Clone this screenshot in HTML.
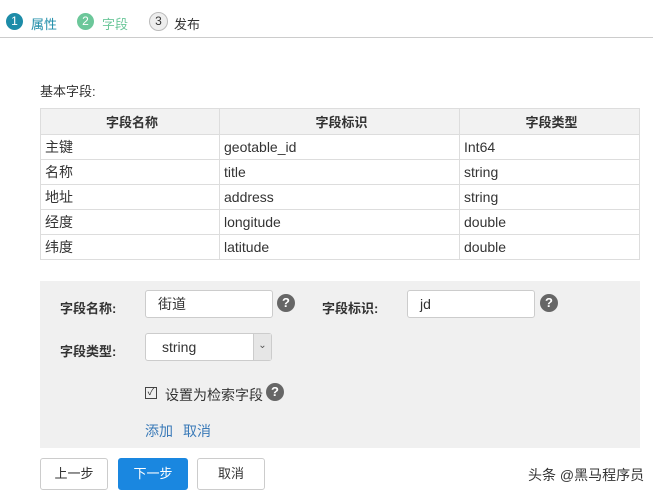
<!DOCTYPE html><html><head><style>
body{margin:0;width:653px;height:497px;background:#fff;font-family:"Liberation Sans","Noto Sans CJK SC",sans-serif;font-size:13px;color:#333;position:relative;overflow:hidden}
.a{position:absolute}
.c{position:absolute;width:17px;height:17px;border-radius:50%;text-align:center;line-height:17px;font-size:12px}
table{position:absolute;left:40px;top:108px;width:600px;border-collapse:collapse}
td,th{border:1px solid #ddd;height:24px;padding:0 0 0 4px;font-size:14px;text-align:left;font-weight:normal}
th{background:#f2f2f2;text-align:center;font-weight:bold;font-size:13px;height:25px}
.q{position:absolute;width:18px;height:18px;border-radius:50%;background:#666;color:#fff;font-weight:bold;font-size:13px;text-align:center;line-height:18px}
.in{position:absolute;background:#fff;border:1px solid #ccc;border-radius:3px;height:26px;line-height:26px;font-size:14px}
.lb{position:absolute;font-weight:bold;font-size:13px}
.btn{position:absolute;top:458px;height:30px;border:1px solid #ccc;border-radius:3px;background:#fff;text-align:center;line-height:30px;font-size:13px}
</style></head><body>
<div class="c" style="left:6px;top:13px;background:#1d8ca8;color:#fff">1</div><div class="a" style="left:31px;top:14px;color:#1d8ca8;font-size:13px">属性</div>
<div class="c" style="left:77px;top:13px;background:#6cc79a;color:#fff">2</div><div class="a" style="left:102px;top:14px;color:#6cc79a;font-size:13px">字段</div>
<div class="c" style="left:149px;top:12px;background:#eee;border:1px solid #bbb;color:#333">3</div><div class="a" style="left:174px;top:14px;font-size:13px">发布</div>
<div class="a" style="left:0;top:37px;width:653px;height:1px;background:#ccc"></div>
<div class="a" style="left:40px;top:81px">基本字段:</div>
<table><tr><th style="width:174px">字段名称</th><th style="width:235px">字段标识</th><th>字段类型</th></tr>
<tr><td>主键</td><td>geotable_id</td><td>Int64</td></tr>
<tr><td>名称</td><td>title</td><td>string</td></tr>
<tr><td>地址</td><td>address</td><td>string</td></tr>
<tr><td>经度</td><td>longitude</td><td>double</td></tr>
<tr><td>纬度</td><td>latitude</td><td>double</td></tr></table>
<div class="a" style="left:40px;top:281px;width:600px;height:167px;background:#f0f0f0"></div>
<div class="lb" style="left:60px;top:298px">字段名称:</div>
<div class="in" style="left:145px;top:290px;width:114px;padding-left:12px">街道</div>
<div class="q" style="left:277px;top:294px">?</div>
<div class="lb" style="left:322px;top:298px">字段标识:</div>
<div class="in" style="left:407px;top:290px;width:114px;padding-left:12px">jd</div>
<div class="q" style="left:540px;top:294px">?</div>
<div class="lb" style="left:60px;top:341px">字段类型:</div>
<div class="in" style="left:145px;top:333px;width:109px;padding-left:16px">string</div>
<div class="a" style="left:253px;top:334px;width:17px;height:26px;background:#e6e6e6;border-left:1px solid #ccc;font-size:10px;text-align:center;line-height:24px;color:#555">⌄</div>
<div class="a" style="left:145px;top:387px;width:10px;height:10px;border:1px solid #444;font-size:10px;line-height:10px;text-align:center">✓</div>
<div class="a" style="left:165px;top:385px;font-size:14px">设置为检索字段</div>
<div class="q" style="left:266px;top:383px">?</div>
<div class="a" style="left:145px;top:421px;color:#3a7ab8;font-size:14px">添加</div><div class="a" style="left:183px;top:421px;color:#3a7ab8;font-size:14px">取消</div>
<div class="btn" style="left:40px;width:66px">上一步</div>
<div class="btn" style="left:118px;width:68px;background:#1a87e0;border-color:#1a87e0;color:#fff">下一步</div>
<div class="btn" style="left:197px;width:66px">取消</div>
<div class="a" style="left:528px;top:465px;font-size:14px;color:#333">头条 @黑马程序员</div>
</body></html>
